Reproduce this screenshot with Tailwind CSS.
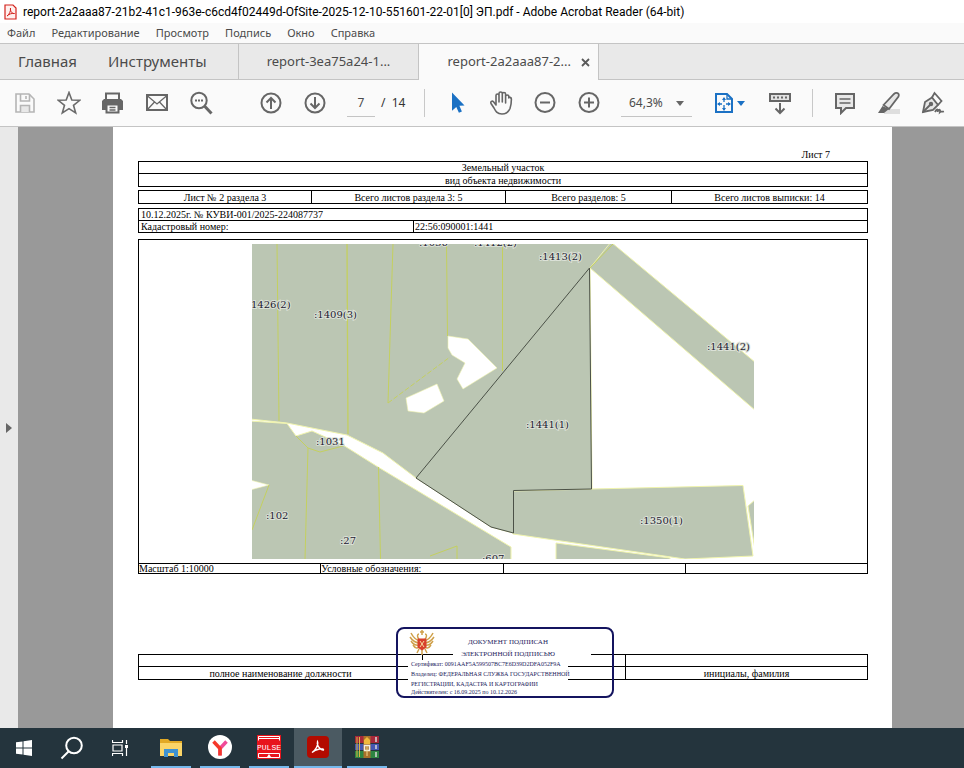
<!DOCTYPE html>
<html lang="ru">
<head>
	<meta charset="UTF-8">
	<meta name="viewport" content="width=device-width, initial-scale=1.0">
	<title>Adobe Acrobat Reader (64-bit)</title>
	<script src="https://cdn.jsdelivr.net/npm/@tailwindcss/browser@4"></script>
</head>
<body class="h-screen flex flex-col overflow-hidden bg-[#fafafa] text-[#4b4b4b] font-['Noto_Sans','Open_Sans',sans-serif]">
	<!-- Window title -->
	<header class="h-[23px] shrink-0 flex items-center gap-[6px] pl-1 bg-white text-black">
		<svg class="w-[13px] h-4" viewBox="0 0 13 16" fill="none">
			<path d="M1 1h8l3 3v11H1z" fill="#fff0ee" stroke="#d3221c" stroke-width="1.2"/>
			<path d="M3 12c2-1 4-5 3.500-8C6 7 8 10 10.500 9.500C8 9 5 10 3 12z" stroke="#d3221c"/>
		</svg>
		<h1 class="text-[12px] whitespace-nowrap font-[Roboto,sans-serif]">report-2a2aaa87-21b2-41c1-963e-c6cd4f02449d-OfSite-2025-12-10-551601-22-01[0] ЭП.pdf - Adobe Acrobat Reader (64-bit)</h1>
	</header>

	<!-- Menu -->
	<nav class="h-[21px] shrink-0 flex items-center gap-4 pl-[7px] text-[11px] border-b border-[#c4c4c4]">
		<button>Файл</button>
		<button>Редактирование</button>
		<button>Просмотр</button>
		<button>Подпись</button>
		<button>Окно</button>
		<button>Справка</button>
	</nav>

	<!-- Tabs -->
	<nav class="h-9 shrink-0 flex bg-[#e9e9e9] text-[15px]">
		<div class="w-[239px] flex items-center gap-[31px] pl-[18px] border-r border-b border-[#c4c4c4]">
			<button>Главная</button>
			<button>Инструменты</button>
		</div>
		<button class="w-[180px] text-[13px] border-r border-b border-[#c4c4c4]">report-3ea75a24-1...</button>
		<div class="w-[180px] flex items-center justify-end gap-[10px] pr-2 text-[13px] bg-[#fafafa] border-r border-[#c4c4c4]">
			<button>report-2a2aaa87-2...</button>
			<button aria-label="Закрыть">
				<svg class="w-[9px] h-[9px]" viewBox="0 0 9 9" stroke="#5a5a5a" stroke-width="1.800"><path d="M1 1l7 7M8 1l-7 7"/></svg>
			</button>
		</div>
		<div class="flex-1 border-b border-[#c4c4c4]"></div>
	</nav>

	<!-- Toolbar -->
	<div class="h-[47px] shrink-0 flex items-center pl-[3px] text-[12px] border-b border-[#c4c4c4]">
		<button class="w-11 flex justify-center" aria-label="Сохранить">
			<svg class="w-6 h-6" viewBox="0 0 24 24" fill="none" stroke="#b5b5b5" stroke-width="1.600"><path d="M3 3h13l5 5v13H3z"/><path d="M7.500 3v7h9V3M13 5v3" /><path d="M7.500 21v-6.500h9V21" fill="#e8e8e8"/></svg>
		</button>
		<button class="w-11 flex justify-center" aria-label="В избранное">
			<svg class="w-6 h-6" viewBox="0 0 24 24" fill="none" stroke="#6b6b6b" stroke-width="1.600"><path d="M12 1.500l2.800 7.500 8 .3-6.300 5 2.200 7.700L12 17.600 5.300 22l2.200-7.700-6.300-5 8-.3z"/></svg>
		</button>
		<button class="w-11 flex justify-center" aria-label="Печать">
			<svg class="w-6 h-6" viewBox="0 0 24 24"><path d="M5 8V2.500h13V8" fill="none" stroke="#666" stroke-width="2"/><path d="M3 8h17l2 2v9H1v-9z" fill="#666"/><path d="M5.500 13.500h12V21.500h-12z" fill="#fafafa" stroke="#666" stroke-width="2"/><path d="M8.500 16.500h6M8.500 19h6" stroke="#666" stroke-width="1.300"/></svg>
		</button>
		<button class="w-11 flex justify-center" aria-label="Отправить по почте">
			<svg class="w-6 h-6" viewBox="0 0 24 24" fill="none" stroke="#666"><path d="M2 4h20v15H2z" stroke-width="2"/><path d="M2 4.500l10 8.500 10-8.500M2.500 18.500l7-7.500M21.500 18.500l-7-7.500" stroke-width="1.300"/></svg>
		</button>
		<button class="w-11 flex justify-center" aria-label="Найти">
			<svg class="w-6 h-6" viewBox="0 0 24 24" fill="none" stroke="#666" stroke-width="2"><circle cx="10" cy="9.500" r="7.700"/><path d="M15.500 15l7 7.500" stroke-width="3"/><path d="M6 9.500h8" stroke-dasharray="2 1"/></svg>
		</button>
		<button class="w-11 ml-[26px] flex justify-center" aria-label="Предыдущая страница">
			<svg class="w-6 h-6" viewBox="0 0 24 24" fill="none" stroke="#666" stroke-width="2"><circle cx="12" cy="12" r="9.500"/><path d="M12 18V7M7.500 11.500L12 7l4.500 4.500"/></svg>
		</button>
		<button class="w-11 flex justify-center" aria-label="Следующая страница">
			<svg class="w-6 h-6" viewBox="0 0 24 24" fill="none" stroke="#666" stroke-width="2"><circle cx="12" cy="12" r="9.500"/><path d="M12 6v11M7.500 12.500L12 17l4.500-4.500"/></svg>
		</button>
		<input class="w-7 h-7 ml-[10px] text-center border-b border-[#c4c4c4]" value="7" aria-label="Номер страницы">
		<span class="w-[49px] pl-[6px] text-[#333] whitespace-pre">/  14</span>
		<div class="w-px h-7 bg-[#c8c8c8]"></div>
		<button class="w-11 ml-[10px] flex justify-center" aria-label="Выделение">
			<svg class="w-6 h-6" viewBox="0 0 24 24" fill="#1b71c4"><path d="M7 1.500v18.300l4.300-3.800 2.600 5.800 3-1.300-2.500-5.700 5.100-.4z"/></svg>
		</button>
		<button class="w-11 flex justify-center" aria-label="Рука">
			<svg class="w-6 h-6" viewBox="0 0 24 24" fill="none" stroke="#666" stroke-width="1.600" stroke-linecap="round" stroke-linejoin="round"><path d="M7 12V4.500c0-2 3-2 3 0V11V2.500c0-2 3.300-2 3.300 0V11V3c0-2 3.300-2 3.300 0v9V5.500c0-2 3.200-2 3.200 0V7c0-1 2.600-1 2.600 1 0 0 0 5.500-1.400 9.500-1.500 3.500-4.500 5.500-8 5.500-5 0-6.500-3-8-6L2 12.500c-.8-2 1.200-3 2.500-1.700L7 14z"/></svg>
		</button>
		<button class="w-11 flex justify-center" aria-label="Уменьшить">
			<svg class="w-6 h-6" viewBox="0 0 24 24" fill="none" stroke="#666" stroke-width="2"><circle cx="12" cy="11.500" r="9.500"/><path d="M7 11.500h10"/></svg>
		</button>
		<button class="w-11 flex justify-center" aria-label="Увеличить">
			<svg class="w-6 h-6" viewBox="0 0 24 24" fill="none" stroke="#666" stroke-width="2"><circle cx="12" cy="11.500" r="9.500"/><path d="M7 11.500h10M12 6.500v10"/></svg>
		</button>
		<div class="relative ml-[10px]">
			<select class="w-[71px] h-7 pl-2 appearance-none border-b border-[#c4c4c4]" aria-label="Масштаб">
				<option>64,3%</option>
			</select>
			<svg class="absolute right-2 top-3 w-2 h-[5px]" viewBox="0 0 8 5" fill="#666"><path d="M0 0h8L4 5z"/></svg>
		</div>
		<button class="w-8 ml-[22px] flex items-center gap-[3px]" aria-label="По размеру окна">
			<svg class="w-5 h-[22px] shrink-0" viewBox="0 0 20 22" fill="none" stroke="#1b71c4"><path d="M2 2h11l5 5v13H2z" stroke-width="2"/><path d="M13 2v5h5" stroke-width="1.300"/><path d="M10 6v4M10 13v5M4 12h4M12 12h4" stroke-width="1.300"/><path d="M8 8l2-3 2 3zM8 16l2 3 2-3zM6 10l-3 2 3 2zM14 10l3 2-3 2z" fill="#1b71c4" stroke="none"/></svg>
			<svg class="w-2 h-[5px] shrink-0" viewBox="0 0 8 5" fill="#1b71c4"><path d="M0 0h8L4 5z"/></svg>
		</button>
		<button class="w-11 ml-3 flex justify-center" aria-label="Прокрутка">
			<svg class="w-6 h-6" viewBox="0 0 24 24" fill="none" stroke="#666" stroke-width="2"><path d="M2 10V3h20v7z" fill="#e2e2e2"/><path d="M5 6.500h15" stroke-dasharray="2 2"/><path d="M12 12v10M7.500 17.500L12 22l4.500-4.500"/></svg>
		</button>
		<div class="w-px h-7 ml-[10px] bg-[#c8c8c8]"></div>
		<button class="w-11 ml-[10px] flex justify-center" aria-label="Комментарий">
			<svg class="w-6 h-6" viewBox="0 0 24 24" fill="#e8e8e8" stroke="#666" stroke-width="2"><path d="M3 3h18v14h-8l-5 5v-5H3z"/><path d="M6.500 8h11M6.500 12h11" stroke-width="1.300"/></svg>
		</button>
		<button class="w-11 flex justify-center" aria-label="Выделить текст">
			<svg class="w-6 h-6" viewBox="0 0 24 24" fill="none" stroke="#666" stroke-width="1.800"><path d="M7 18h16v5H7z" fill="#dedede" stroke="none"/><path d="M6.500 14L17 3c2-2 6-1 4.500 2.500L12 18z" fill="#e6e6e6"/><path d="M5.500 15L1 22h6l5-4z" fill="#666" stroke="none"/></svg>
		</button>
		<button class="w-11 flex justify-center" aria-label="Подписать">
			<svg class="w-6 h-6" viewBox="0 0 24 24" fill="none" stroke="#666" stroke-width="1.800"><path d="M2 21L4 11l7-4.500 6 7.500-5 5z" fill="#e6e6e6"/><path d="M11 6.500L13.500 2l7 8-3.500 4M2 21l7-7"/><circle cx="10" cy="13" r="1.300" fill="#666"/><path d="M14 21c2-4 3-3 2.500 0 1-3 3-3 2.500 0 1-1 2 0 4-.5"/></svg>
		</button>
	</div>

	<!-- Document area -->
	<div class="flex-1 min-h-0 flex bg-[#999999]">
		<button class="w-[18px] shrink-0 flex items-center justify-center bg-[#e9e9e9]" aria-label="Показать панель">
			<svg class="w-[6px] h-[10px]" viewBox="0 0 6 10" fill="#666"><path d="M0 0l6 5-6 5z"/></svg>
		</button>
		<main class="flex-1 min-w-0 ml-[95px] mr-[72px] px-[25px] pr-6 pt-[22px] relative bg-white text-black text-[10px] leading-[11px] font-['Liberation_Serif',serif]">
			<p class="text-right pr-[38px] pb-px">Лист 7</p>

			<table class="w-full border-collapse text-center">
				<tr class="h-[12px]"><td class="p-0 border">Земельный участок</td></tr>
				<tr class="h-[13px]"><td class="p-0 border">вид объекта недвижимости</td></tr>
			</table>

			<table class="w-full mt-[3px] table-fixed border-collapse text-center">
				<tr class="h-[13px]">
					<td class="p-0 border w-[173px]">Лист № 2 раздела 3</td>
					<td class="p-0 border w-[194px]">Всего листов раздела 3: 5</td>
					<td class="p-0 border w-[166px]">Всего разделов: 5</td>
					<td class="p-0 border">Всего листов выписки: 14</td>
				</tr>
			</table>

			<table class="w-full mt-1 table-fixed border-collapse">
				<colgroup><col class="w-[275px]"><col></colgroup>
				<tr class="h-[12px]"><td class="p-0 pl-[2px] border" colspan="2">10.12.2025г. № КУВИ-001/2025-224087737</td></tr>
				<tr class="h-[12px]"><td class="p-0 pl-[2px] border">Кадастровый номер:</td><td class="p-0 pl-px border">22:56:090001:1441</td></tr>
			</table>

			<table class="w-full mt-[6px] table-fixed border-collapse">
				<tr>
					<td class="p-0 pt-1 pb-1 border" colspan="4">
						<svg class="block mx-auto w-[502px] h-[315px]" viewBox="252 244 502 315" role="img" aria-label="План участка">
							<!-- parcels -->
							<g fill="#bbc6b3" stroke="#f0f4ae">
								<path d="M250 242H615L590 268L592 489L513 491V533L491 527L416 478L383 453L347 435L287 423L250 419z"/>
								<path d="M250 421L287 423.500L296 436L312 431L343 445L378 467L511 547V561H250z"/>
								<path d="M611 242L756 363V411L590 268z"/>
								<path d="M513 491L592 489L743 485.500L753 556L685 559L513 534z"/>
								<path d="M556 543L670 558V562H556z"/>
								<path d="M748 506L756 499V556z"/>
							</g>
							<g fill="white" stroke="#f0f4ae" stroke-width=".6">
								<path d="M448 336L468 339L497 368L463 389L457 379L465 363L452 355L448 348z"/>
								<path d="M406 398L437 384L444 401L424 413L408 411z"/>
								<path d="M250 480L269 485L250 490z"/>
							</g>
							<!-- inner borders -->
							<g fill="none" stroke="#c4d05f">
								<path d="M277 244L279 421M393 244L388 403M446.500 244L447.500 336M502.500 244V371"/>
								<path d="M347 244L348 434" stroke-width="1.300"/>
								<path d="M388 403L450 357" stroke-dasharray="5 2"/>
								<path d="M308 448L305 559M378.500 467L380.500 559M296 436L308 448L320 452L343 446M269 485L252 530M430 556L457 546V559M590 268L613 244"/>
							</g>
							<!-- selected parcel -->
							<path d="M589.500 268L416 478L491 527L513.500 533V490.500L591.500 489z" fill="#bbc6b3" stroke="#4b5147"/>
							<g class="font-['DejaVu_Serif',serif] text-[10px] [paint-order:stroke]" fill="#1d2030" stroke="#dbe1d7" stroke-width="2">
								<text x="419" y="246">:1036</text>
								<text x="474" y="246">:1412(2)</text>
								<text x="539" y="260">:1413(2)</text>
								<text x="251" y="308">1426(2)</text>
								<text x="314" y="318">:1409(3)</text>
								<text x="707" y="350">:1441(2)</text>
								<text x="526" y="428">:1441(1)</text>
								<text x="316" y="445">:1031</text>
								<text x="266" y="519">:102</text>
								<text x="340" y="544">:27</text>
								<text x="640" y="524">:1350(1)</text>
								<text x="482" y="562">:607</text>
							</g>
						</svg>
					</td>
				</tr>
				<tr class="h-[10px] leading-[9px]">
					<td class="p-0 border">Масштаб 1:10000</td>
					<td class="p-0 border">Условные обозначения:</td>
					<td class="p-0 border"></td>
					<td class="p-0 border"></td>
				</tr>
			</table>

			<div class="relative mt-20">
				<table class="w-full table-fixed border-collapse text-center">
					<colgroup><col class="w-[284px]"><col class="w-[203px]"><col></colgroup>
					<tr class="h-[12px]"><td class="p-0 border"></td><td class="p-0 border"></td><td class="p-0 border"></td></tr>
					<tr class="h-[13px]"><td class="p-0 border">полное наименование должности</td><td class="p-0 border"></td><td class="p-0 border">инициалы, фамилия</td></tr>
				</table>

				<!-- Signature stamp -->
				<div class="absolute left-[258px] -top-[27px] w-[218px] h-[71px] rounded-lg border-2 border-[#14145f] text-[#1c1c5c]">
					<svg class="absolute left-[10px] top-0 w-7 h-7" viewBox="0 0 28 28" fill="none">
						<g stroke="#cfa04a" stroke-width="1.500">
							<path d="M12 12C8 11 5 8 3 4M12 14C7 14 4 11 2 8M12 16C8 17 5 15 3 12M12 18C9 20 7 19 5 16"/>
							<path d="M16 12C20 11 23 8 25 4M16 14C21 14 24 11 26 8M16 16C20 17 23 15 25 12M16 18C19 20 21 19 23 16"/>
							<path d="M11 10C9 8 9 5 11 5M17 10C19 8 19 5 17 5M12 3h4M14 1v5M11 20l-2 4M17 20l2 4M14 20v6"/>
						</g>
						<path d="M9.500 9.500h9v9l-4.500 3-4.500-3z" fill="#d8402c"/>
						<path d="M12 12l4 6M16 12l-4 6" stroke="#f6d9a0"/>
					</svg>
					<div class="ml-[55px] w-[138px] pt-[7px] text-[7px] leading-3 text-center">
						<p class="pr-7">ДОКУМЕНТ ПОДПИСАН</p>
						<p class="pr-7 bg-white">ЭЛЕКТРОННОЙ ПОДПИСЬЮ</p>
					</div>
					<div class="ml-[10px] w-[160px] pl-[3px] bg-white text-[6px] leading-[10px] whitespace-nowrap">
						<p class="leading-[9px]">Сертификат: 0091AAF5A599507BC7E6D39D2DFA052F9A</p>
						<p>Владелец: ФЕДЕРАЛЬНАЯ СЛУЖБА ГОСУДАРСТВЕННОЙ</p>
						<p>РЕГИСТРАЦИИ, КАДАСТРА И КАРТОГРАФИИ</p>
						<p class="leading-[6px]">Действителен: с 16.09.2025 по 10.12.2026</p>
					</div>
				</div>
			</div>
		</main>
	</div>

	<!-- Taskbar -->
	<footer class="h-10 shrink-0 flex bg-[#24343d]">
		<button class="w-12 flex items-center justify-center" aria-label="Пуск">
			<svg class="w-4 h-4" viewBox="0 0 16 16" fill="white"><path d="M0 2.300l6.500-.9v6.100H0zM7.500 1.300L16 0v7.500H7.500zM0 8.500h6.500v6.100L0 13.700zM7.500 8.500H16V16l-8.500-1.300z"/></svg>
		</button>
		<button class="w-12 flex items-center justify-center" aria-label="Поиск">
			<svg class="w-6 h-6" viewBox="0 0 24 24" fill="none" stroke="white" stroke-width="2"><circle cx="14" cy="9.500" r="7.800"/><path d="M8.500 15.500L1.500 22.500"/></svg>
		</button>
		<button class="w-12 flex items-center justify-center" aria-label="Представление задач">
			<svg class="w-4 h-4" viewBox="0 0 16 16" fill="none" stroke="white" stroke-width="1.200"><path d="M1 5h9v6H1zM.5 0v2.500h10V0M.5 16v-2.500h10V16M14.500 0v4M14.500 8v8"/><path d="M13 5h3v3h-3z" fill="white" stroke="none"/></svg>
		</button>
		<button class="w-[49px] ml-[2px] flex flex-col items-center" aria-label="Проводник">
			<span class="flex-1 flex items-center">
				<svg class="w-[22px] h-[19px]" viewBox="0 0 22 19"><path d="M0 1h8l2 2h12v15H0z" fill="#e2a925"/><path d="M0 5h22v13H0z" fill="#fbd568"/><path d="M4 19v-8h14v8h-4v-4H8v4z" fill="#3f92d1"/></svg>
			</span>
			<span class="w-10 h-[2px] bg-[#76b9ed]"></span>
		</button>
		<button class="w-[49px] flex flex-col items-center" aria-label="Яндекс Браузер">
			<span class="flex-1 flex items-center">
				<svg class="w-6 h-6" viewBox="0 0 24 24" fill="none" stroke-width="3.500"><circle cx="12" cy="12" r="12" fill="white"/><path d="M12 20.500v-7L18.500 6.500" stroke="#f04a98"/><path d="M12 20.500v-7L5.500 6.500" stroke="#f5382a"/></svg>
			</span>
			<span class="w-10 h-[2px] bg-[#76b9ed]"></span>
		</button>
		<button class="w-[49px] flex flex-col items-center" aria-label="Pulse">
			<span class="flex-1 flex items-center">
				<svg class="w-6 h-6" viewBox="0 0 24 24"><path d="M0 0h24v24H0z" fill="#e8141c"/><path d="M1.500 5.500v-4h21v4M2 3.500h20M1.500 18.500h21v4h-21z" stroke="white" fill="none"/><path d="M10 22l2-3 2 3z" fill="white"/><text x="12" y="15" text-anchor="middle" fill="white" class="font-['Liberation_Mono',monospace] text-[8px]">PULSE</text></svg>
			</span>
			<span class="w-10 h-[2px] bg-[#76b9ed]"></span>
		</button>
		<button class="w-12 ml-px flex flex-col items-center bg-[#4b5a62]" aria-label="Acrobat Reader">
			<span class="flex-1 flex items-center">
				<svg class="w-[22px] h-[22px]" viewBox="0 0 22 22" fill="none"><rect width="22" height="22" rx="4" fill="#b30b00"/><path d="M5 16.500C8 14.500 12 9 10.500 5.500C9.500 8 12 14 16.500 14C17.500 12 9 12.500 5 16.500z" stroke="white" stroke-width="1.300"/></svg>
			</span>
			<span class="w-full h-[2px] bg-[#76b9ed]"></span>
		</button>
		<button class="w-[49px] flex flex-col items-center" aria-label="WinRAR">
			<span class="flex-1 flex items-center">
				<svg class="w-6 h-[22px]" viewBox="0 0 24 22"><path d="M0 0h24v7H0z" fill="#a5283a"/><path d="M0 8h24v6H0z" fill="#4556b0"/><path d="M0 15h24v7H0z" fill="#2e8542"/><path d="M2 1v20M4.500 1v20" stroke="#d9b545"/><path d="M21 1v5M21 9v4M21 16v5" stroke="#d9d9d9" stroke-width="1.500"/><path d="M8.500 0h7v22h-7z" fill="#a9702b"/><path d="M9 4l3-3 3 3v4H9z" fill="#f0b93c"/><path d="M9.500 9.500h5v5h-5z" fill="none" stroke="#f1eee4" stroke-width="1.500"/><path d="M12 10v10" stroke="#f3d98b"/></svg>
			</span>
			<span class="w-10 h-[2px] bg-[#76b9ed]"></span>
		</button>
	</footer>
</body>
</html>
